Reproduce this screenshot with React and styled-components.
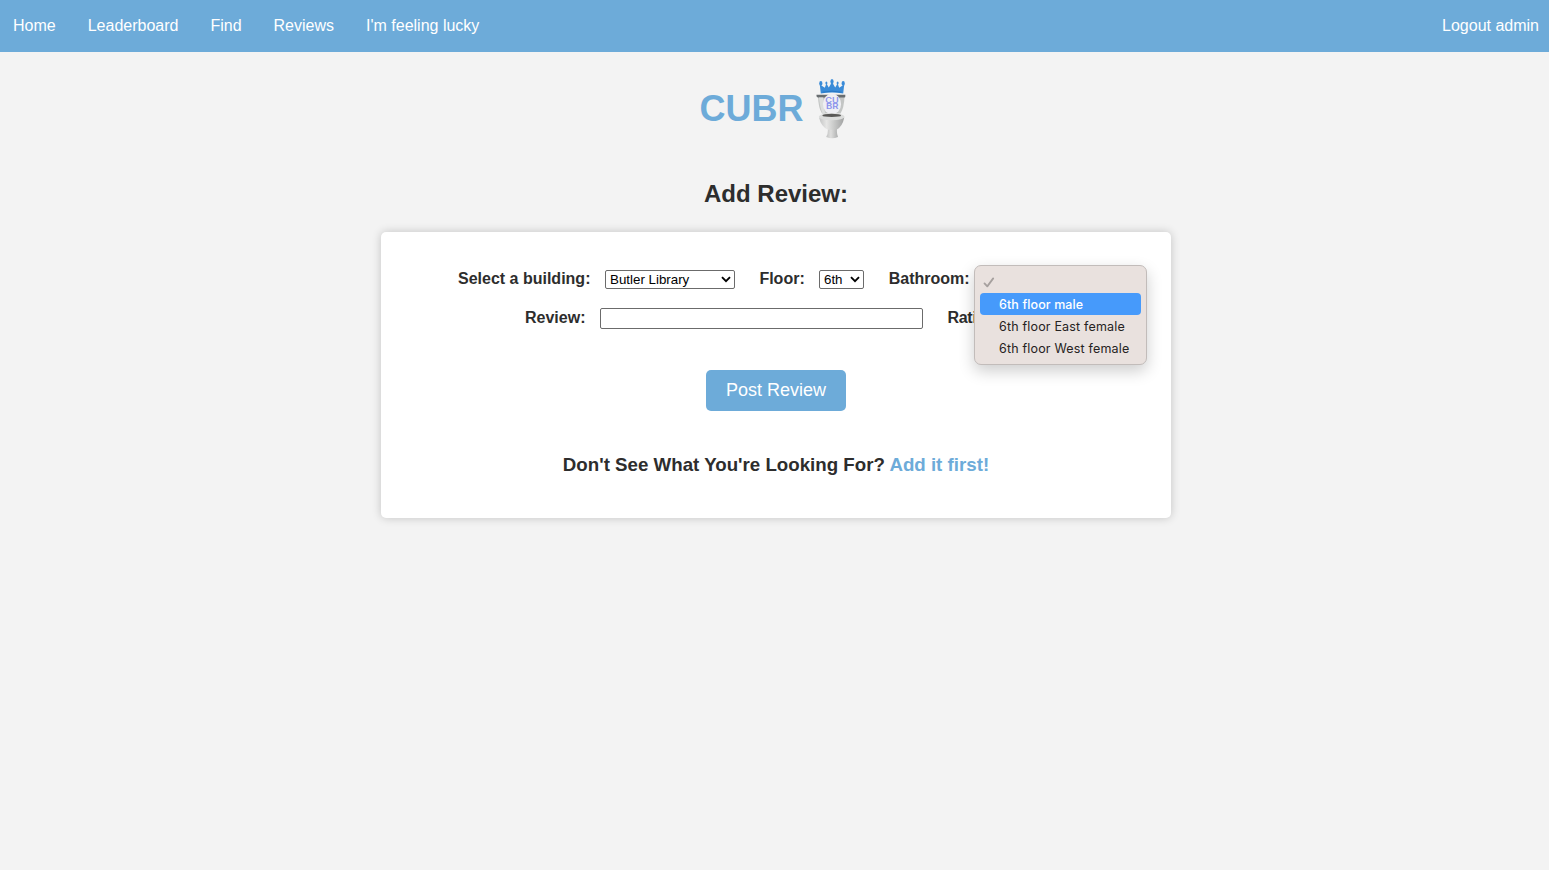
import React from "react";
import styled, { createGlobalStyle } from "styled-components";

const Global = createGlobalStyle`
  * { box-sizing: border-box; }
  body {
    margin: 0;
    background: #f3f3f3;
    color: #2d2d2d;
    font-family: "Liberation Sans", Arial, sans-serif;
  }
`;

const Nav = styled.nav`
  display: flex;
  align-items: center;
  gap: 32px;
  height: 52px;
  padding: 0 10px 0 13px;
  background: #6dabd9;
`;

const NavLink = styled.a`
  color: #fff;
  font-size: 16px;
  line-height: 18px;
  margin-left: ${(p) => (p.$end ? "auto" : "0")};
`;

const Main = styled.main`
  display: flex;
  flex-direction: column;
  align-items: center;
  min-height: calc(100vh - 52px);
  padding-left: 3px;
`;

const Brand = styled.h1`
  display: flex;
  align-items: center;
  height: 60px;
  margin: 27px 4px 0 0;
  color: #6dabd9;
  font-size: 36px;
  line-height: 42px;
`;

const LogoSvg = styled.svg`
  display: block;
  margin-left: 9px;
`;

const Heading = styled.h2`
  margin: 41px 0 0;
  font-size: 24px;
  line-height: 28px;
`;

const Card = styled.section`
  position: relative;
  display: flex;
  flex-direction: column;
  align-items: flex-start;
  width: 790px;
  height: 286px;
  margin-top: 24px;
  padding-top: 37px;
  background: #fff;
  border-radius: 5px;
  box-shadow: 0 0 10px rgba(0, 0, 0, 0.2);
`;

const Row = styled.div`
  display: flex;
  align-items: center;
  height: 20px;
  padding-left: ${(p) => p.$indent}px;
  margin-bottom: 19px;
`;

const Label = styled.label`
  width: ${(p) => p.$width}px;
  font-size: 16px;
  line-height: 18px;
  font-weight: 700;
  letter-spacing: ${(p) => (p.$tight ? "-0.25px" : "normal")};
  white-space: nowrap;
`;

const Select = styled.button`
  display: flex;
  align-items: center;
  justify-content: space-between;
  width: ${(p) => p.$width}px;
  height: 19px;
  margin: 1px ${(p) => p.$gap}px 0 0;
  padding: 0 3px 0 4px;
  border: 1px solid #6b6b6b;
  border-radius: 2px;
  background: #fff;
  color: #000;
  font: 13.333px "Liberation Sans", Arial, sans-serif;
`;

const TextInput = styled.input`
  width: 323px;
  height: 21px;
  margin: 0 24.4px 0 0;
  border: 1px solid #6b6b6b;
  border-radius: 2px;
  background: #fff;
`;

const PostButton = styled.button`
  align-self: center;
  width: 140px;
  height: 41px;
  margin: 23px 0 0;
  padding: 0 0 1px;
  border: 0;
  border-radius: 5px;
  background: #6dabd9;
  color: #fff;
  font: 18px "Liberation Sans", Arial, sans-serif;
`;

const Hint = styled.h3`
  align-self: center;
  margin: 43px 0 0;
  font-size: 18.72px;
  line-height: 22px;
`;

const HintLink = styled.a`
  color: #6dabd9;
`;

const Menu = styled.ul`
  position: absolute;
  left: 593px;
  top: 33px;
  width: 173px;
  height: 100px;
  margin: 0;
  padding: 5px;
  list-style: none;
  background: #e9e1de;
  border: 1px solid #c2bcba;
  border-radius: 7px;
  box-shadow: 0 6px 16px rgba(0, 0, 0, 0.2);
`;

const Option = styled.li`
  display: flex;
  align-items: center;
  height: 22px;
  padding-left: ${(p) => (p.$checked ? 3 : 19)}px;
  border-radius: 4px;
  background: ${(p) => (p.$active ? "#469afb" : "transparent")};
  color: ${(p) => (p.$active ? "#fff" : "#262322")};
  font: 12.5px Inter, sans-serif;
  font-weight: ${(p) => (p.$active ? 500 : 400)};
  letter-spacing: ${(p) => (p.$active ? 0.1 : 0.18)}px;
  white-space: nowrap;
`;

const Chevron = () => (
  <svg width="10" height="7" viewBox="0 0 10 7" fill="none">
    <path d="M1 1.2 5 5.2 9 1.2" stroke="#000" strokeWidth="1.9" />
  </svg>
);

const Check = () => (
  <svg width="12" height="12" viewBox="0 0 12 12" fill="none">
    <path d="M1.5 7.4 4.3 10.4 10.2 2.4" stroke="#a6a09e" strokeWidth="1.8" strokeLinecap="round" strokeLinejoin="round" />
  </svg>
);

const Logo = () => (
  <LogoSvg width="36" height="60" viewBox="0 0 36 60">
    <defs>
      <linearGradient id="bowl" x1="0" x2="1">
        <stop offset="0" stopColor="#c3c4c4" />
        <stop offset=".3" stopColor="#e6e6e5" />
        <stop offset=".6" stopColor="#c8c9c8" />
        <stop offset="1" stopColor="#a0a1a1" />
      </linearGradient>
      <linearGradient id="foot" x1="0" x2="1">
        <stop offset="0" stopColor="#b4b5b5" />
        <stop offset=".4" stopColor="#dededd" />
        <stop offset="1" stopColor="#999b9b" />
      </linearGradient>
    </defs>
    <path d="M5 18H31.5Q31 29 27.5 34.5H9Q5.5 29 5 18Z" fill="#c3c5c4" />
    <path d="M3.5 15.8H32.3V17.4Q32.3 18.4 31.3 18.4H5Q3.5 18.4 3.5 17Z" fill="#686d70" />
    <path d="M6 18.5H10L12 34.5H9.6Q7 29 6 18.5Z" fill="#dcdedd" />
    <ellipse cx="19" cy="25" rx="9.1" ry="10.4" fill="#efeff3" />
    <g fill="#398bd8">
      <path d="M7.8 14.5 6.8 5.5 11.8 8.8 13.4 4.5 15.8 8.4 19 3 22.2 8.4 24.6 4.5 26.2 8.8 31.2 5.5 30.2 14.5Q19 12.4 7.8 14.5Z" />
      <ellipse cx="7.8" cy="4.4" rx="1.6" ry="2.4" />
      <ellipse cx="13.4" cy="4" rx="1" ry="1.5" />
      <ellipse cx="19" cy="2.5" rx="1.6" ry="2.5" />
      <ellipse cx="24.6" cy="4" rx="1" ry="1.5" />
      <ellipse cx="30.2" cy="4.4" rx="1.6" ry="2.4" />
    </g>
    <path d="M9.5 13.2Q19 11.2 28.6 13.2" fill="none" stroke="#2878c4" strokeWidth="1" />
    <g fill="#8a92ec" fontFamily="Inter, sans-serif" fontSize="7" fontWeight="600">
      <text x="12.2" y="23.6" textLength="13.4" lengthAdjust="spacingAndGlyphs">CU</text>
      <text x="13" y="29.8" textLength="12.4" lengthAdjust="spacingAndGlyphs">BR</text>
    </g>
    <path d="M11 44 15 50Q15 55 13.2 58Q19 60.5 25 58Q23.5 54 24 50L28 43Z" fill="url(#foot)" />
    <path d="M6 38.5Q8 47.5 15 50.8H23.5Q29.5 47.5 31.3 38.5Z" fill="url(#bowl)" />
    <ellipse cx="18.7" cy="37.8" rx="12.8" ry="3.5" fill="#dcdddc" />
    <ellipse cx="18.7" cy="36.4" rx="9.4" ry="1.7" fill="#5a5957" />
  </LogoSvg>
);

const LINKS = ["Home", "Leaderboard", "Find", "Reviews", "I'm feeling lucky"];
const OPTIONS = ["6th floor male", "6th floor East female", "6th floor West female"];

export default function App() {
  return (
    <>
      <Global />
      <Nav>
        {LINKS.map((label) => (
          <NavLink key={label}>{label}</NavLink>
        ))}
        <NavLink $end>Logout admin</NavLink>
      </Nav>
      <Main>
        <Brand>
          CUBR
          <Logo />
        </Brand>
        <Heading>Add Review:</Heading>
        <Card>
          <Row $indent={77}>
            <Label $width={147}>Select a building:</Label>
            <Select $width={130} $gap={24.4}>Butler Library<Chevron /></Select>
            <Label $width={59.6}>Floor:</Label>
            <Select $width={45} $gap={24.8}>6th<Chevron /></Select>
            <Label $width={85}>Bathroom:</Label>
          </Row>
          <Row $indent={144}>
            <Label $width={75}>Review:</Label>
            <TextInput />
            <Label $width={26} $tight>Rati</Label>
          </Row>
          <PostButton>Post Review</PostButton>
          <Hint>
            Don't See What You're Looking For? <HintLink>Add it first!</HintLink>
          </Hint>
          <Menu>
            <Option $checked><Check /></Option>
            {OPTIONS.map((label, i) => (
              <Option key={label} $active={i === 0}>{label}</Option>
            ))}
          </Menu>
        </Card>
      </Main>
    </>
  );
}
